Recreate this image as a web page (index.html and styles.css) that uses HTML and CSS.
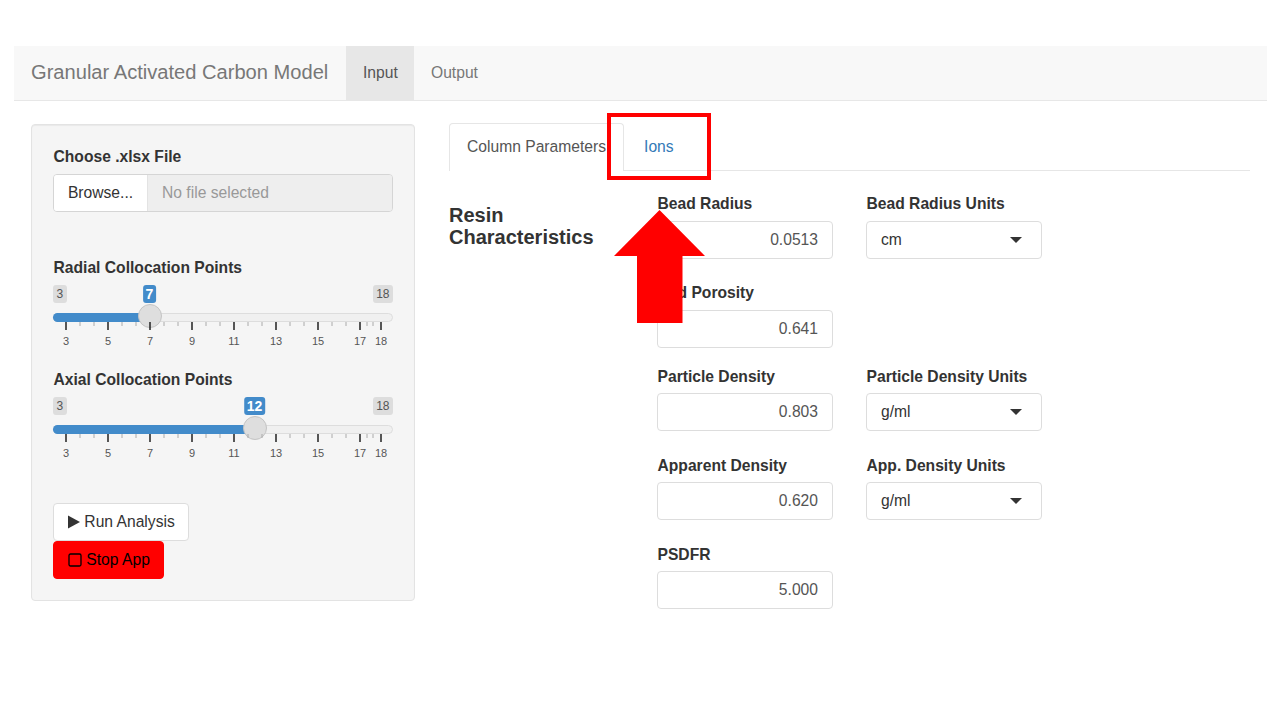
FILE: index.html
```html
<!DOCTYPE html>
<html lang="en">
<head>
  <meta charset="UTF-8">
  <title>Granular Activated Carbon Model</title>
  <link rel="stylesheet" href="styles.css">
</head>
<body>
  <!-- top navigation -->
  <nav class="navbar">
    <span class="brand">Granular Activated Carbon Model</span>
    <a class="nav-link active">Input</a>
    <a class="nav-link">Output</a>
  </nav>

  <div class="page">
    <!-- sidebar -->
    <aside class="well">
      <label class="field-label file-label">Choose .xlsx File</label>
      <div class="file-row">
        <span class="browse">Browse...</span>
        <span class="file-name">No file selected</span>
      </div>

      <label class="field-label slider-label first">Radial Collocation Points</label>
      <div class="slider">
        <span class="pill pill-min">3</span>
        <span class="pill pill-max">18</span>
        <span class="pill pill-value" style="left: 96.500px">7</span>
        <div class="track"></div>
        <div class="track-fill" style="width: 96px"></div>
        <div class="handle" style="left: 84.500px"></div>
        <svg class="scale" width="340" height="36" viewBox="0 0 340 36">
          <path class="minor" d="M27 0v4M41 0v4M69 0v4M83 0v4M111 0v4M125 0v4M153 0v4M167 0v4M195 0v4M209 0v4M237 0v4M251 0v4M279 0v4M293 0v4M314 0v4M320 0v4"/>
          <path class="major" d="M13 0v8M55 0v8M97 0v8M139 0v8M181 0v8M223 0v8M265 0v8M307 0v8M328 0v8"/>
          <text x="13" y="23">3</text><text x="55" y="23">5</text><text x="97" y="23">7</text><text x="139" y="23">9</text><text x="181" y="23">11</text><text x="223" y="23">13</text><text x="265" y="23">15</text><text x="307" y="23">17</text><text x="328" y="23">18</text>
        </svg>
      </div>

      <label class="field-label slider-label">Axial Collocation Points</label>
      <div class="slider">
        <span class="pill pill-min">3</span>
        <span class="pill pill-max">18</span>
        <span class="pill pill-value" style="left: 201.500px">12</span>
        <div class="track"></div>
        <div class="track-fill" style="width: 202px"></div>
        <div class="handle" style="left: 189.700px"></div>
        <svg class="scale" width="340" height="36" viewBox="0 0 340 36">
          <path class="minor" d="M27 0v4M41 0v4M69 0v4M83 0v4M111 0v4M125 0v4M153 0v4M167 0v4M195 0v4M209 0v4M237 0v4M251 0v4M279 0v4M293 0v4M314 0v4M320 0v4"/>
          <path class="major" d="M13 0v8M55 0v8M97 0v8M139 0v8M181 0v8M223 0v8M265 0v8M307 0v8M328 0v8"/>
          <text x="13" y="23">3</text><text x="55" y="23">5</text><text x="97" y="23">7</text><text x="139" y="23">9</text><text x="181" y="23">11</text><text x="223" y="23">13</text><text x="265" y="23">15</text><text x="307" y="23">17</text><text x="328" y="23">18</text>
        </svg>
      </div>

      <div class="actions">
        <button class="btn">
          <svg class="btn-icon" width="12" height="14" viewBox="0 0 12 14"><path d="M0 0.500L12 7L0 13.500Z" fill="#333"/></svg>
          Run Analysis
        </button>
        <button class="btn btn-stop">
          <svg class="btn-icon" width="14" height="14" viewBox="0 0 14 14"><rect x="1" y="1" width="12" height="12" rx="1.500" fill="none" stroke="#000" stroke-width="1.300"/></svg>
          Stop App
        </button>
      </div>
    </aside>

    <!-- main panel -->
    <main class="content">
      <ul class="tabs">
        <li class="tab active">Column Parameters</li>
        <li class="tab">Ions</li>
      </ul>

      <div class="section">
        <h3 class="section-title">Resin Characteristics</h3>
        <div class="fields">
          <div class="row row-first">
            <div class="field">
              <label class="field-label">Bead Radius</label>
              <div class="num-input">0.0513</div>
            </div>
            <div class="field">
              <label class="field-label">Bead Radius Units</label>
              <div class="select-input">cm<span class="caret"></span></div>
            </div>
          </div>
          <div class="row row-short">
            <div class="field">
              <label class="field-label">Bed Porosity</label>
              <div class="num-input">0.641</div>
            </div>
          </div>
          <div class="row">
            <div class="field">
              <label class="field-label">Particle Density</label>
              <div class="num-input">0.803</div>
            </div>
            <div class="field">
              <label class="field-label">Particle Density Units</label>
              <div class="select-input">g/ml<span class="caret"></span></div>
            </div>
          </div>
          <div class="row">
            <div class="field">
              <label class="field-label">Apparent Density</label>
              <div class="num-input">0.620</div>
            </div>
            <div class="field">
              <label class="field-label">App. Density Units</label>
              <div class="select-input">g/ml<span class="caret"></span></div>
            </div>
          </div>
          <div class="row">
            <div class="field">
              <label class="field-label">PSDFR</label>
              <div class="num-input">5.000</div>
            </div>
          </div>
        </div>
      </div>
    </main>
  </div>

  <!-- annotation drawn over the screenshot -->
  <div class="callout-box"></div>
  <svg class="callout-arrow" width="92" height="114" viewBox="0 0 92 114">
    <path d="M45.500 0L91 46H68.500V113H23V46H0Z" fill="#ff0000"/>
  </svg>
</body>
</html>
```

FILE: styles.css
```css
/* base */
body {
  position: relative;
  margin: 0;
  padding: 46px 13px 0 14px;
  font-family: "Liberation Sans", Arial, sans-serif;
  font-size: 15.650px;
  color: #333;
  background-color: #fff;
}

/* navbar */
.navbar {
  display: flex;
  align-items: stretch;
  height: 54px;
  background-color: #f8f8f8;
  border-bottom: 1px solid #e7e7e7;
}

.brand {
  width: 298px;
  padding: 0 17px;
  font-size: 20.130px;
  line-height: 52px;
  white-space: nowrap;
  color: #777;
}

.nav-link {
  padding: 0 17px;
  line-height: 53px;
  color: #777;
}

.nav-link.active {
  width: 34px;
  background-color: #e7e7e7;
  color: #555;
}

.page {
  display: flex;
  align-items: flex-start;
  padding: 0 17px;
  gap: 34px;
}

/* sidebar */
.well {
  box-sizing: border-box;
  flex: 0 0 384px;
  margin-top: 23px;
  padding: 21px 21px 21px;
  background-color: #f5f5f5;
  border: 1px solid #e3e3e3;
  border-radius: 4px;
  box-shadow: inset 0 1px 1px rgba(0, 0, 0, 0.05);
}

.field-label {
  display: block;
  margin-bottom: 6px;
  padding-left: 0.500px;
  font-weight: bold;
  line-height: 21px;
  color: #333;
}

.file-label {
  margin-bottom: 7px;
}

.file-row {
  display: flex;
  height: 38px;
  box-sizing: border-box;
  border: 1px solid #d5d5d5;
  border-radius: 4px;
  overflow: hidden;
  line-height: 36px;
}

.browse {
  width: 93px;
  text-align: center;
  background-color: #fff;
  border-right: 1px solid #e3e3e3;
}

.file-name {
  flex: 1;
  padding-left: 14px;
  background-color: #eee;
  color: #999;
}

.slider-label {
  margin-bottom: -1px;
}

.slider-label.first {
  margin-top: 45px;
}

/* sliders */
.slider {
  position: relative;
  height: 92px;
}

.pill {
  position: absolute;
  top: 8px;
  height: 18px;
  padding: 0 3.500px;
  border-radius: 3px;
  font-size: 12px;
  line-height: 18px;
  background-color: #ddd;
  color: #555;
}

.pill-min {
  left: 0;
}

.pill-max {
  right: 0;
  padding: 0 3.500px;
}

.pill-value {
  transform: translateX(-50%);
  padding: 0 3px;
  font-size: 14px;
  font-weight: bold;
  background-color: #428bca;
  color: #fff;
}

.track {
  position: absolute;
  top: 36px;
  left: 0;
  right: 0;
  box-sizing: border-box;
  height: 9px;
  background-color: #f0f0f0;
  border: 1px solid #ddd;
  border-radius: 5px;
}

.track-fill {
  position: absolute;
  top: 36px;
  left: 0;
  height: 9px;
  background-color: #428bca;
  border-radius: 5px 0 0 5px;
}

.handle {
  position: absolute;
  top: 27px;
  box-sizing: border-box;
  width: 24px;
  height: 24px;
  background-color: #dedede;
  border: 1px solid #c4c4c4;
  border-radius: 50%;
}

.scale {
  position: absolute;
  top: 45px;
  left: 0;
}

.scale .major {
  stroke: #222;
  stroke-width: 1.500;
}

.scale .minor {
  stroke: #aaa;
  stroke-width: 1;
}

.scale text {
  font-size: 11px;
  fill: #555;
  text-anchor: middle;
}

/* buttons */
.actions {
  display: flex;
  flex-direction: column;
  align-items: flex-start;
  margin-top: 22px;
}

.btn {
  height: 38px;
  padding: 0 13.500px 0 14px;
  font-family: inherit;
  font-size: 15.650px;
  color: #333;
  background-color: #fff;
  border: 1px solid #ddd;
  border-radius: 4px;
}

.btn-icon {
  vertical-align: -2px;
}

.btn-stop {
  background-color: #ff0000;
  border-color: #ff0000;
  color: #000;
}

/* main panel */
.content {
  flex: 1;
  margin-top: 22px;
}

.tabs {
  display: flex;
  height: 47px;
  margin: 0;
  padding: 0;
  list-style: none;
  border-bottom: 1px solid #e6e6e6;
}

.tab {
  margin-left: 2px;
  padding: 0 18px;
  line-height: 47px;
  color: #337ab7;
}

.tab.active {
  margin-left: 0;
  margin-bottom: -1px;
  padding: 0 17px;
  line-height: 46px;
  background-color: #fff;
  border: 1px solid #e6e6e6;
  border-bottom: none;
  border-radius: 4px 4px 0 0;
  color: #555;
}

.section {
  display: flex;
  margin-top: 22px;
}

.section-title {
  flex: 0 0 208px;
  box-sizing: border-box;
  margin: 11px 0 0;
  padding-right: 40px;
  font-size: 20px;
  line-height: 22px;
  font-weight: bold;
  color: #333;
}

.fields {
  display: flex;
  flex-direction: column;
  gap: 24px;
}

.row {
  display: flex;
  gap: 33px;
}

.row-first {
  margin-bottom: -1px;
}

.row-first .field-label,
.row-short .field-label {
  margin-bottom: 7px;
}

.row-short {
  margin-bottom: -6px;
}

.field {
  width: 176px;
}

.num-input,
.select-input {
  box-sizing: border-box;
  height: 38px;
  background-color: #fff;
  border: 1px solid #ddd;
  border-radius: 4px;
  line-height: 36px;
  color: #555;
}

.num-input {
  padding-right: 14px;
  text-align: right;
}

.select-input {
  display: flex;
  align-items: center;
  justify-content: space-between;
  padding: 0 19px 0 14px;
  color: #333;
}

.caret {
  width: 0;
  height: 0;
  border-left: 6px solid transparent;
  border-right: 6px solid transparent;
  border-top: 6px solid #333;
}

/* annotation */
.callout-box {
  position: absolute;
  top: 113px;
  left: 607px;
  box-sizing: border-box;
  width: 104px;
  height: 67px;
  border: 4px solid #ff0000;
}

.callout-arrow {
  position: absolute;
  top: 210px;
  left: 614px;
}
```
